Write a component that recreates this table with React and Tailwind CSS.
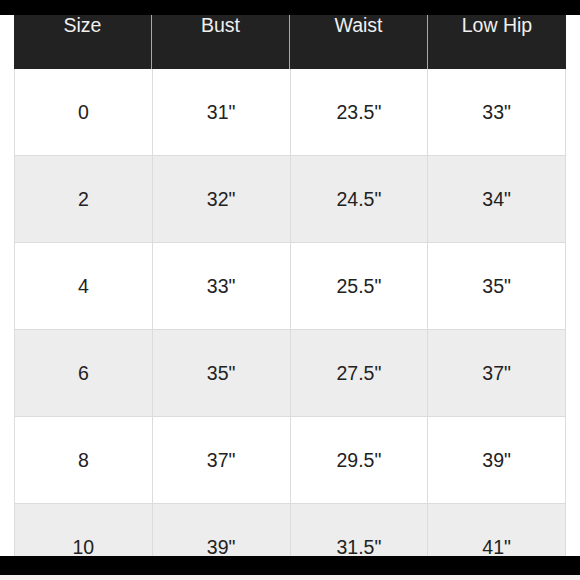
const headers = ['Size', 'Bust', 'Waist', 'Low Hip']

const rows = [
  ['0', '31"', '23.5"', '33"'],
  ['2', '32"', '24.5"', '34"'],
  ['4', '33"', '25.5"', '35"'],
  ['6', '35"', '27.5"', '37"'],
  ['8', '37"', '29.5"', '39"'],
  ['10', '39"', '31.5"', '41"'],
]

export default function App() {
  return (
    <div className="w-[580px] h-[580px] overflow-hidden flex flex-col bg-white font-['Liberation_Sans',Arial,sans-serif]">
      <div className="h-[15px] shrink-0 bg-black" />

      <div className="flex-1 overflow-hidden pl-[14px] pr-[14px]">
        <div className="grid grid-cols-4">
          {headers.map((h, i) => (
            <div
              key={h}
              className={`h-[54px] bg-[#222] text-[#f0f0f0] text-[19.5px] leading-[21px] text-center ${i < 3 ? 'border-r border-[#a8a8a8]' : ''}`}
            >
              {h}
            </div>
          ))}
        </div>

        <div className="border-l border-[#dcdcdc]">
          {rows.map((row, r) => (
            <div key={r} className={`grid grid-cols-4 ${r % 2 === 1 ? 'bg-[#ededed]' : 'bg-white'}`}>
              {row.map((cell, c) => (
                <div
                  key={c}
                  className="h-[87px] pt-[2px] flex items-center justify-center border-r border-b border-[#dcdcdc] text-[19.5px] text-[#222]"
                >
                  {cell}
                </div>
              ))}
            </div>
          ))}
        </div>
      </div>

      <div className="h-[19px] shrink-0 bg-black" />
      <div className="h-[5px] shrink-0 bg-[#f4eeee]" />
    </div>
  )
}
